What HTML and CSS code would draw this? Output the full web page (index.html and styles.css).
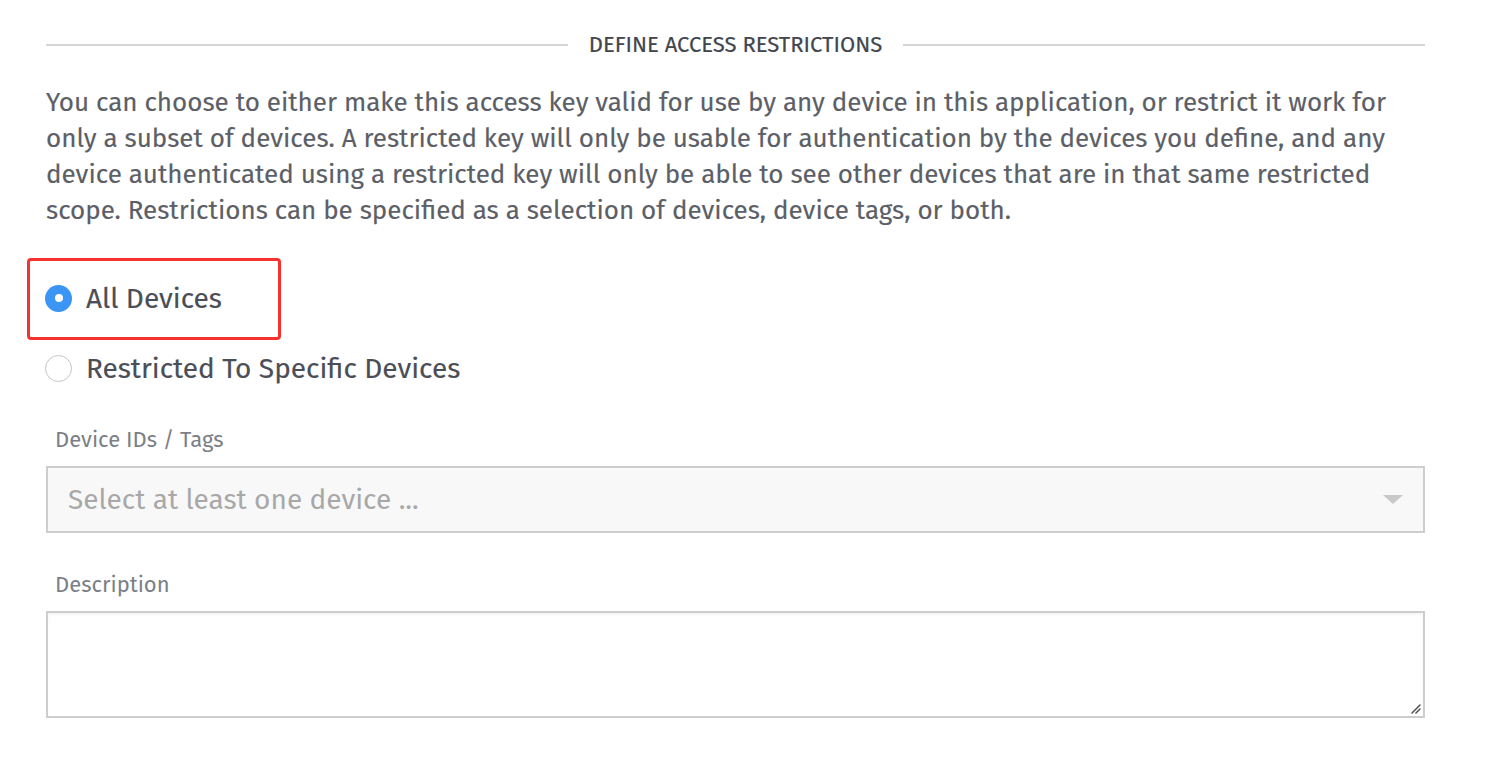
FILE: index.html
```html
<!DOCTYPE html>
<html lang="en">
<head>
<meta charset="utf-8">
<title>Define Access Restrictions</title>
<link rel="stylesheet" href="styles.css">
</head>
<body>
<main class="page">
  <div class="divider">
    <span class="divider-line"></span>
    <h2 class="divider-title">DEFINE ACCESS RESTRICTIONS</h2>
    <span class="divider-line"></span>
  </div>

  <p class="intro">You can choose to either make this access key valid for use by any device in this application, or restrict it work for only a subset of devices. A restricted key will only be usable for authentication by the devices you define, and any device authenticated using a restricted key will only be able to see other devices that are in that same restricted scope. Restrictions can be specified as a selection of devices, device tags, or both.</p>

  <div class="radios">
    <label class="radio highlighted">
      <span class="radio-dot checked"></span>
      <span class="radio-text">All Devices</span>
    </label>
    <label class="radio">
      <span class="radio-dot"></span>
      <span class="radio-text">Restricted To Specific Devices</span>
    </label>
  </div>

  <div class="field field-select">
    <div class="field-label">Device IDs / Tags</div>
    <div class="select">
      <span class="select-placeholder">Select at least one device ...</span>
      <span class="select-arrow"></span>
    </div>
  </div>

  <div class="field field-desc">
    <div class="field-label">Description</div>
    <div class="textarea">
      <svg class="resize" width="12" height="12" viewBox="0 0 12 12"><path d="M11 3 L3 11 M11 7 L7 11" stroke="#555" stroke-width="1.6" stroke-linecap="round" fill="none"/></svg>
    </div>
  </div>
</main>
</body>
</html>
```
FILE: styles.css
```css
*, *::before, *::after { box-sizing: border-box; }
html, body { margin: 0; padding: 0; background: #fff; }
body {
  font-family: "Fira Sans", "Open Sans", "Noto Sans", sans-serif;
  color: #5f626a;
}
.page {
  width: 1379px;
  margin-left: 46px;
  padding-top: 33px;
  display: flex;
  flex-direction: column;
}
.divider {
  display: flex;
  align-items: center;
  height: 24px;
  gap: 21px;
}
.divider-line {
  flex: 1;
  height: 2px;
  background: #d6d6d6;
}
.divider-title {
  margin: 0;
  font-size: 22px;
  font-weight: 400;
  line-height: 24px;
  color: #43464f;
  -webkit-text-stroke: 0.2px #43464f;
}
.intro {
  margin: 28px 0 0;
  font-size: 26px;
  line-height: 36px;
  color: #5c5f67;
  -webkit-text-stroke: 0.15px #5c5f67;
}
.radios {
  margin-top: 49px;
  display: flex;
  flex-direction: column;
  gap: 30px;
}
.radio {
  position: relative;
  display: flex;
  align-items: center;
  height: 40px;
  font-size: 28px;
  color: #4b4e57;
  -webkit-text-stroke: 0.15px #4b4e57;
}
.radio-dot {
  width: 27px;
  height: 27px;
  border-radius: 50%;
  border: 1px solid #c4c4c4;
  background: #fff;
  margin-left: -1px;
  margin-right: 14px;
  flex: none;
  position: relative;
}
.radio-dot.checked {
  border: none;
  background: #3a95f4;
}
.radio-dot.checked::after {
  content: "";
  position: absolute;
  left: 50%;
  top: 50%;
  width: 8px;
  height: 8px;
  margin: -4px 0 0 -4px;
  border-radius: 50%;
  background: #fff;
}
.highlighted::before {
  content: "";
  position: absolute;
  left: -19px;
  top: -20px;
  width: 254px;
  height: 82px;
  border: 3px solid #f5322f;
  border-radius: 4px;
}
.field {
  display: flex;
  flex-direction: column;
  gap: 14px;
}
.field-select { margin-top: 40px; }
.field-desc { margin-top: 40px; }
.field-label {
  padding-left: 9px;
  font-size: 22px;
  line-height: 24px;
  color: #7b7f87;
}
.select {
  height: 67px;
  border: 2px solid #cdcdcd;
  background: #f8f8f8;
  display: flex;
  align-items: center;
  justify-content: space-between;
  padding: 0 20px 0 20px;
}
.select-placeholder {
  font-size: 28px;
  color: #a8a8a8;
}
.select-arrow {
  width: 0;
  height: 0;
  border-left: 10px solid transparent;
  border-right: 10px solid transparent;
  border-top: 9px solid #c8c8c8;
}
.textarea {
  position: relative;
  height: 107px;
  border: 2px solid #cdcdcd;
  background: #fff;
  box-shadow: inset 0 2px 3px rgba(0,0,0,0.04);
}
.resize {
  position: absolute;
  right: 2px;
  bottom: 2px;
}
```
